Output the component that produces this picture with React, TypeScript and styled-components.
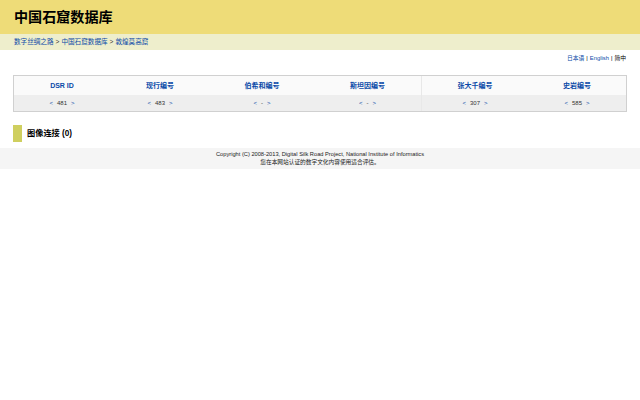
import React from "react";
import styled, {createGlobalStyle} from "styled-components";

const GlobalStyle = createGlobalStyle`
  html, body {
    margin: 0;
    padding: 0;
    background: #fff;
    font-family: "Liberation Sans", "Noto Sans CJK SC", sans-serif;
    color: #000;
  }
`;

const StyledHeader = styled.header`
  height: 34px;
  background: #eedc78;
  display: flex;
  align-items: center;
  padding-left: 14px;
`;

const StyledTitle = styled.h1`
  margin: 0;
  font-size: 14.1px;
  line-height: 18px;
  font-weight: 700;
`;

const StyledCrumbs = styled.nav`
  height: 16px;
  background: #eeeecc;
  display: flex;
  align-items: flex-start;
  padding-left: 14px;
  font-size: 6.6px;
  line-height: 16px;
  color: #333;
  gap: 2px;
`;

const StyledLink = styled.a`
  color: #0b4aa8;
  text-decoration: none;
`;

const StyledLangs = styled.div`
  height: 15px;
  padding-right: 14px;
  display: flex;
  justify-content: flex-end;
  align-items: center;
  gap: 2px;
  font-size: 5.8px;
`;

const StyledTable = styled.div`
  margin: 10px 13px 0;
  border: 1px solid #d0d0d0;
  display: grid;
  grid-template-columns: 96fr 100fr 104fr 108fr 106fr 98fr;
  height: 37px;
  box-sizing: border-box;
`;

const StyledColumn = styled.div<{$divided?: boolean}>`
  display: grid;
  grid-template-rows: 19px 16px;
  border-right: ${props => props.$divided ? "1px solid #e8e8e8" : "none"};
`;

const StyledColumnTitle = styled.div`
  background: #fafafa;
  color: #0b4aa8;
  font-size: 7px;
  line-height: 19px;
  font-weight: 700;
  text-align: center;
`;

const StyledColumnValue = styled.div`
  display: flex;
  justify-content: center;
  align-items: center;
  gap: 4px;
  background: #eeeeee;
  font-size: 6px;
  color: #333;
`;

const StyledArrow = styled.span`
  color: #0b4aa8;
  font-size: 6px;
`;

const StyledSectionHeading = styled.h2`
  margin: 13px 13px 0;
  height: 17px;
  display: flex;
  align-items: center;
  gap: 5px;
  font-size: 8.2px;
  line-height: 15px;
  font-weight: 700;

  &::before {
    content: "";
    width: 9px;
    height: 17px;
    background: #cfcf5f;
  }
`;

const StyledFooter = styled.footer`
  margin-top: 6px;
  height: 21px;
  background: #f5f5f5;
  padding-top: 2px;
  box-sizing: border-box;
  display: flex;
  flex-direction: column;
  align-items: center;
  font-size: 5.7px;
  line-height: 8px;
  color: #222;
`;

const columns = [
    {title: "DSR ID", value: "481"},
    {title: "现行编号", value: "483"},
    {title: "伯希和编号", value: "-"},
    {title: "斯坦因编号", value: "-", divided: true},
    {title: "张大千编号", value: "307"},
    {title: "史岩编号", value: "585"},
];

const App: React.FC = () => {
    return (
        <>
            <GlobalStyle/>
            <StyledHeader>
                <StyledTitle>中国石窟数据库</StyledTitle>
            </StyledHeader>
            <StyledCrumbs>
                <StyledLink href="#">数字丝绸之路</StyledLink>
                <span>&gt;</span>
                <StyledLink href="#">中国石窟数据库</StyledLink>
                <span>&gt;</span>
                <StyledLink href="#">敦煌莫高窟</StyledLink>
            </StyledCrumbs>
            <StyledLangs>
                <StyledLink href="#">日本语</StyledLink>
                <span>|</span>
                <StyledLink href="#">English</StyledLink>
                <span>|</span>
                <span>简中</span>
            </StyledLangs>
            <StyledTable>
                {columns.map(column => (
                    <StyledColumn key={column.title} $divided={column.divided}>
                        <StyledColumnTitle>{column.title}</StyledColumnTitle>
                        <StyledColumnValue>
                            <StyledArrow>&lt;</StyledArrow>
                            {column.value}
                            <StyledArrow>&gt;</StyledArrow>
                        </StyledColumnValue>
                    </StyledColumn>
                ))}
            </StyledTable>
            <StyledSectionHeading>图像连接 (0)</StyledSectionHeading>
            <StyledFooter>
                <div>Copyright (C) 2008-2013, Digital Silk Road Project, National Institute of Informatics</div>
                <div>您在本网站认证的数字文化内容使用适合评估。</div>
            </StyledFooter>
        </>
    );
};

export default App;
